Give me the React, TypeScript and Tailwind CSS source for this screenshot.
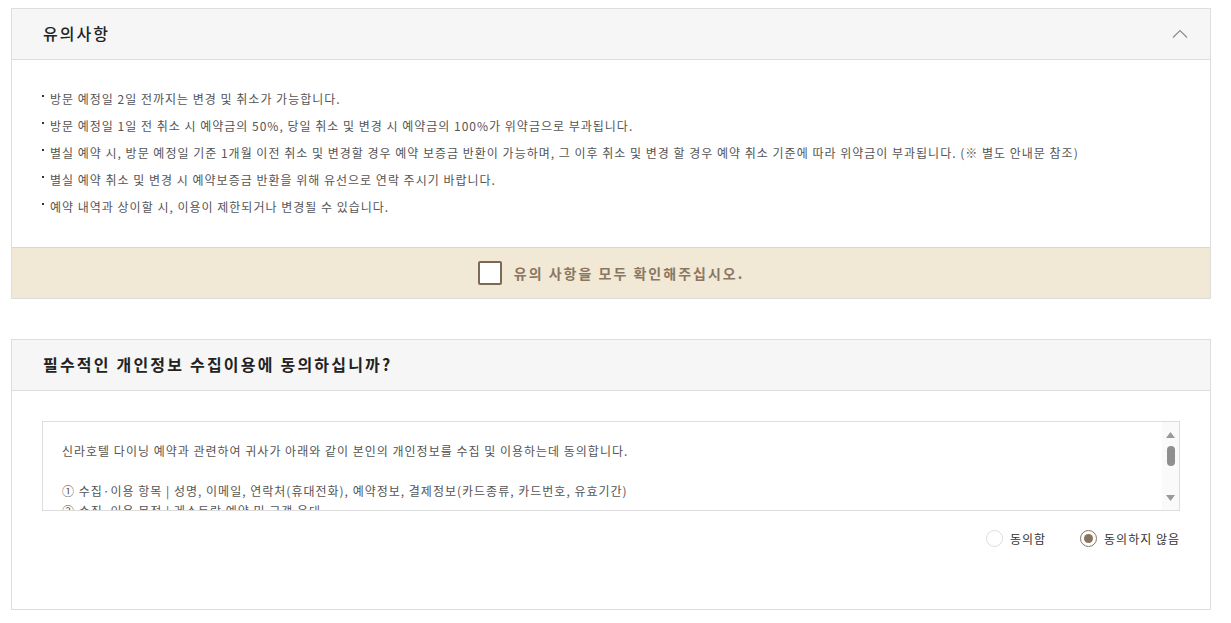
import React, { useState } from "react";

const FONT = { fontFamily: '"Noto Sans CJK KR", "Noto Sans", sans-serif' };

const NOTICES = [
  "방문 예정일 2일 전까지는 변경 및 취소가 가능합니다.",
  "방문 예정일 1일 전 취소 시 예약금의 50%, 당일 취소 및 변경 시 예약금의 100%가 위약금으로 부과됩니다.",
  "별실 예약 시, 방문 예정일 기준 1개월 이전 취소 및 변경할 경우 예약 보증금 반환이 가능하며, 그 이후 취소 및 변경 할 경우 예약 취소 기준에 따라 위약금이 부과됩니다. (※ 별도 안내문 참조)",
  "별실 예약 취소 및 변경 시 예약보증금 반환을 위해 유선으로 연락 주시기 바랍니다.",
  "예약 내역과 상이할 시, 이용이 제한되거나 변경될 수 있습니다.",
];

function Radio({ checked, label, onClick }: { checked: boolean; label: string; onClick: () => void }) {
  return (
    <button type="button" onClick={onClick} className="flex items-center gap-[7px]">
      <span
        className={
          checked
            ? "w-[17px] h-[17px] rounded-full border border-[#8a7460] flex items-center justify-center bg-white"
            : "w-[17px] h-[17px] rounded-full border border-[#dcdcdc] bg-white"
        }
      >
        {checked && <span className="w-[9px] h-[9px] rounded-full bg-[#8a7460]" />}
      </span>
      <span className="text-[12px] tracking-[1px] text-[#333] leading-none">{label}</span>
    </button>
  );
}

export default function App() {
  const [checked, setChecked] = useState(false);
  const [agree, setAgree] = useState(false);

  return (
    <div className="w-full h-[623px] bg-white px-[11px] pt-[8px]" style={FONT}>
      {/* 유의사항 */}
      <div className="w-[1200px] border border-[#dddddd]">
        <div className="h-[51px] bg-[#f6f6f6] border-b border-[#dddddd] flex items-center justify-between pl-[31px] pr-[22px]">
          <h3 className="text-[16px] leading-none tracking-[2px] font-medium text-[#222] -mt-[2px]">유의사항</h3>
          <svg width="16" height="10" viewBox="0 0 16 10" fill="none">
            <polyline points="1,8.5 8,1.5 15,8.5" stroke="#8c8c8c" strokeWidth="1.2" />
          </svg>
        </div>
        <ul className="pt-[25px] pb-[27px] pl-[30px]">
          {NOTICES.map((t) => (
            <li key={t} className="flex items-center h-[27px] text-[12px] tracking-[1px] text-[#555]">
              <span className="w-[2px] h-[2px] bg-[#333] mr-[6px] -mt-[6px]" />
              {t}
            </li>
          ))}
        </ul>
        <div className="h-[51px] bg-[#f1e9d5] border-t border-[#e2d8bc] flex items-center justify-center gap-[12px]">
          <button
            type="button"
            onClick={() => setChecked(!checked)}
            className="w-[24px] h-[24px] bg-white border-2 border-[#7d6a55] rounded-[2px] flex items-center justify-center"
          >
            {checked && (
              <svg width="14" height="14" viewBox="0 0 14 14" fill="none">
                <polyline points="2,7 6,11 12,3" stroke="#7d6a55" strokeWidth="2" />
              </svg>
            )}
          </button>
          <span className="text-[14px] tracking-[2px] font-bold text-[#8b7761]">유의 사항을 모두 확인해주십시오.</span>
        </div>
      </div>

      {/* 개인정보 */}
      <div className="w-[1200px] border border-[#dddddd] mt-[40px]">
        <div className="h-[51px] bg-[#f6f6f6] border-b border-[#dddddd] flex items-center pl-[31px]">
          <h3 className="text-[16px] leading-none tracking-[2.2px] font-bold text-[#222] -mt-[2px]">
            필수적인 개인정보 수집이용에 동의하십니까?
          </h3>
        </div>
        <div className="px-[30px] pt-[30px] pb-[62px]">
          <div className="h-[90px] border border-[#dddddd] flex">
            <div className="flex-1 overflow-hidden pl-[19px] pt-[19px] text-[12px] tracking-[1px] leading-[20px] text-[#555]">
              <p>신라호텔 다이닝 예약과 관련하여 귀사가 아래와 같이 본인의 개인정보를 수집 및 이용하는데 동의합니다.</p>
              <p className="h-[20px]" />
              <p>① 수집·이용 항목 | 성명, 이메일, 연락처(휴대전화), 예약정보, 결제정보(카드종류, 카드번호, 유효기간)</p>
              <p>② 수집·이용 목적 | 레스토랑 예약 및 고객 응대</p>
              <p>③ 보유·이용 기간 | 이용 목적 달성 시까지</p>
            </div>
            <div className="w-[17px] bg-[#fafafa] flex flex-col items-center pt-[10px] pb-[9px]">
              <svg width="9" height="6" viewBox="0 0 9 6">
                <polygon points="4.5,0 9,6 0,6" fill="#9a9a9a" />
              </svg>
              <div className="w-[8px] h-[20px] rounded-full bg-[#8f8f8f] mt-[8px]" />
              <div className="flex-1" />
              <svg width="9" height="6" viewBox="0 0 9 6">
                <polygon points="0,0 9,0 4.5,6" fill="#9a9a9a" />
              </svg>
            </div>
          </div>
          <div className="flex justify-end gap-[34px] mt-[19px]">
            <Radio checked={agree} label="동의함" onClick={() => setAgree(true)} />
            <Radio checked={!agree} label="동의하지 않음" onClick={() => setAgree(false)} />
          </div>
        </div>
      </div>
    </div>
  );
}
